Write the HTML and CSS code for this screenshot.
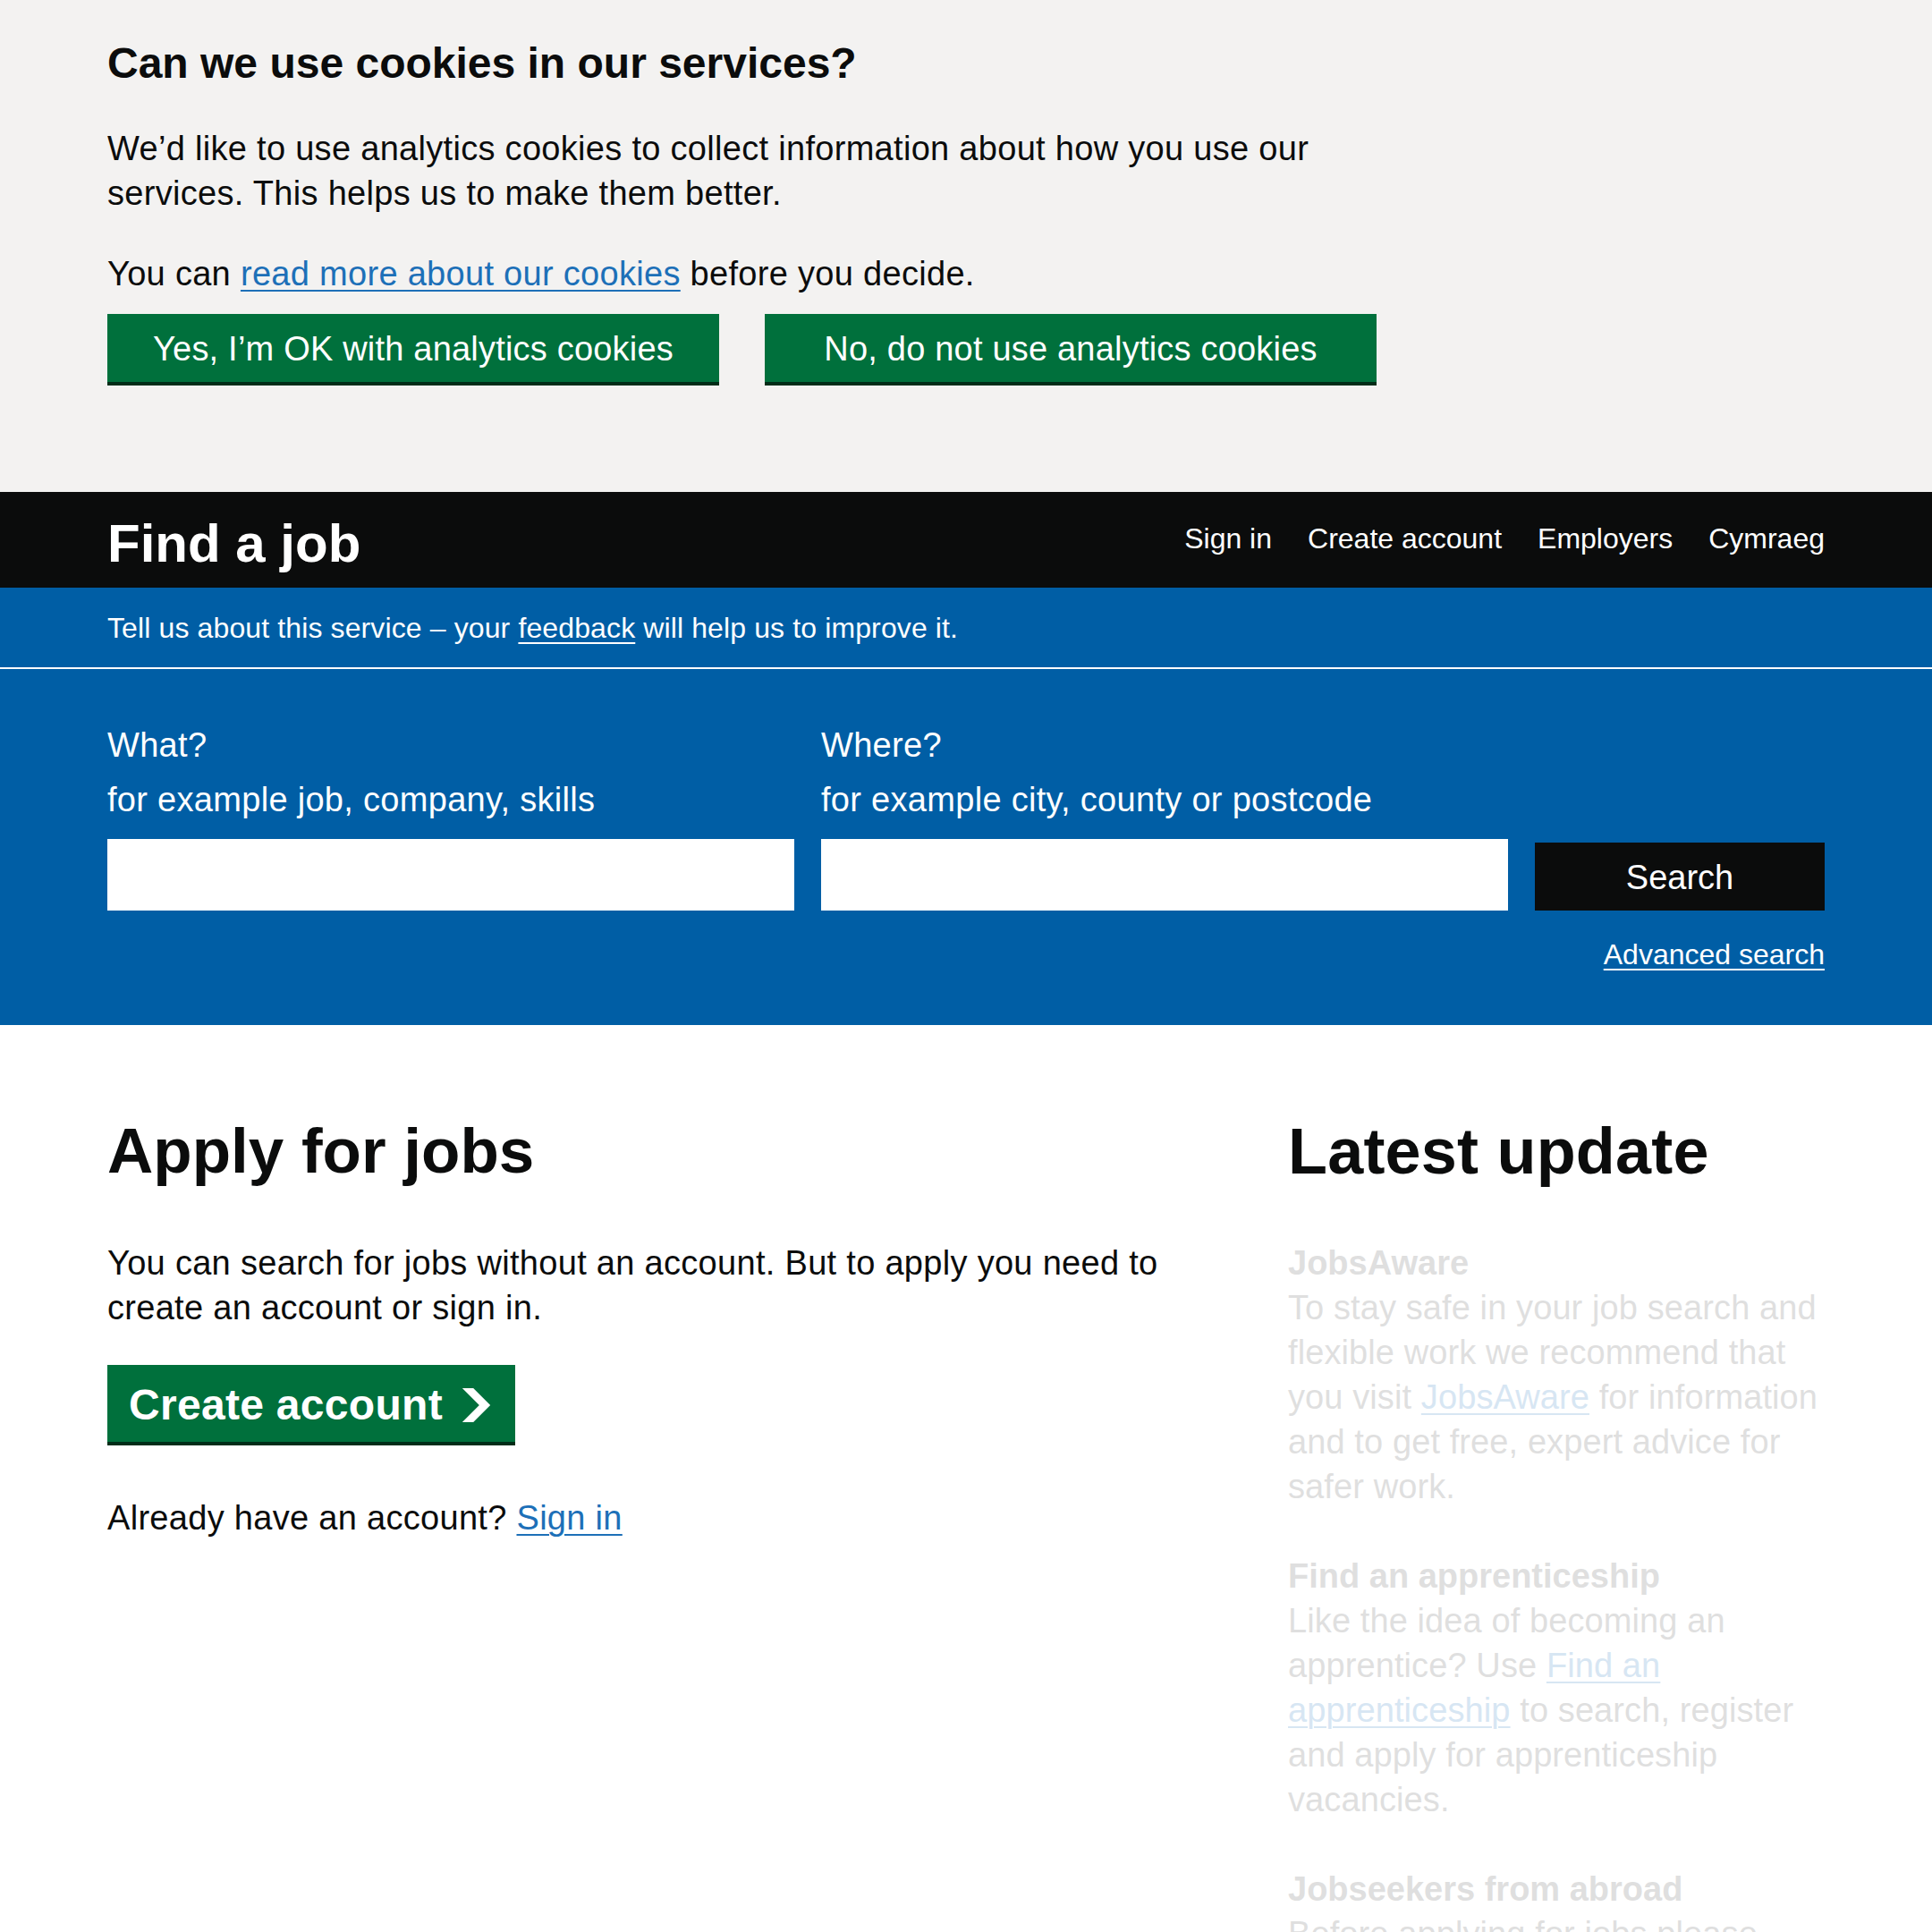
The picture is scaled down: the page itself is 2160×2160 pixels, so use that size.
FILE: index.html
```html
<!DOCTYPE html>
<html lang="en">
<head>
<meta charset="utf-8">
<title>Find a job - GOV.UK</title>
<link rel="stylesheet" href="styles.css">
</head>
<body>
<div class="cookie-banner">
  <div class="container">
    <h2 class="cookie-title">Can we use cookies in our services?</h2>
    <div class="cookie-text">
      <p class="body">We’d like to use analytics cookies to collect information about how you use our services. This helps us to make them better.</p>
      <p class="body body-last">You can <a class="link" href="#">read more about our cookies</a> before you decide.</p>
    </div>
    <div class="button-group">
      <button class="btn btn-cookie">Yes, I’m OK with analytics cookies</button>
      <button class="btn btn-cookie">No, do not use analytics cookies</button>
    </div>
  </div>
</div>

<header class="header">
  <div class="container header-row">
    <a class="service-name" href="#">Find a job</a>
    <nav class="nav">
      <a href="#">Sign in</a>
      <a href="#">Create account</a>
      <a href="#">Employers</a>
      <a href="#">Cymraeg</a>
    </nav>
  </div>
</header>

<div class="feedback">
  <div class="container">
    <p class="feedback-text">Tell us about this service – your <a href="#">feedback</a> will help us to improve it.</p>
  </div>
</div>

<section class="search">
  <div class="container">
    <form class="search-row">
      <div class="field">
        <label class="label" for="what">What?</label>
        <div class="hint">for example job, company, skills</div>
        <input class="input" id="what" type="text">
      </div>
      <div class="field">
        <label class="label" for="where">Where?</label>
        <div class="hint">for example city, county or postcode</div>
        <input class="input" id="where" type="text">
      </div>
      <div class="field-btn">
        <button class="btn-search" type="button">Search</button>
      </div>
    </form>
    <div class="advanced"><a href="#">Advanced search</a></div>
  </div>
</section>

<main class="main">
  <div class="grid-row">
    <div class="col-two-thirds">
      <h1 class="heading-l">Apply for jobs</h1>
      <p class="body">You can search for jobs without an account. But to apply you need to create an account or sign in.</p>
      <a class="btn btn-start" href="#">Create account
        <svg class="start-icon" xmlns="http://www.w3.org/2000/svg" width="35" height="38" viewBox="0 0 33 40" aria-hidden="true"><path fill="currentColor" d="M0 0h13l20 20-20 20H0l20-20z"/></svg>
      </a>
      <p class="body">Already have an account? <a class="link" href="#">Sign in</a></p>
    </div>
    <div class="col-one-third">
      <h2 class="heading-l heading-wide">Latest update</h2>
      <div class="updates">
        <div class="update">
          <h3 class="update-title">JobsAware</h3>
          <p class="update-text">To stay safe in your job search and flexible work we recommend that you visit <a href="#">JobsAware</a> for information and to get free, expert advice for safer work.</p>
        </div>
        <div class="update">
          <h3 class="update-title">Find an apprenticeship</h3>
          <p class="update-text">Like the idea of becoming an apprentice? Use <a href="#">Find an apprenticeship</a> to search, register and apply for apprenticeship vacancies.</p>
        </div>
        <div class="update">
          <h3 class="update-title">Jobseekers from abroad</h3>
          <p class="update-text">Before applying for jobs please check that you have the right to work in the UK.</p>
        </div>
      </div>
    </div>
  </div>
</main>
</body>
</html>
```

FILE: styles.css
```css
* { box-sizing: border-box; }

html, body {
  margin: 0;
  padding: 0;
  background: #ffffff;
  color: #0b0c0c;
  font-family: "Liberation Sans", Arial, Helvetica, sans-serif;
}

p, h1, h2, h3 { margin: 0; }

.container {
  width: 1920px;
  margin: 0 auto;
}

.body {
  font-size: 38px;
  line-height: 50px;
  letter-spacing: 0.3px;
}

.link {
  color: #1d70b8;
  text-decoration: underline;
  text-decoration-thickness: 2px;
  text-underline-offset: 5px;
}

/* Cookie banner */
.cookie-banner {
  background: #f3f2f1;
  height: 550px;
  padding-top: 41px;
}

.cookie-title {
  font-size: 48px;
  line-height: 60px;
  font-weight: 700;
  margin-bottom: 40px;
}

.cookie-text {
  max-width: 1400px;
}

.cookie-text .body { margin-bottom: 40px; }
.cookie-text .body-last { margin-bottom: 20px; }

.button-group {
  display: flex;
  gap: 51px;
}

.btn {
  font-family: inherit;
  border: 0;
  border-radius: 0;
  background: #00703c;
  color: #ffffff;
  box-shadow: 0 4px 0 #002d18;
  cursor: pointer;
  text-decoration: none;
}

.btn-cookie {
  width: 684px;
  height: 76px;
  font-size: 38px;
  line-height: 40px;
  letter-spacing: 0.2px;
  padding: 2px 0 0;
}

/* Header */
.header {
  background: #0b0c0c;
  height: 107px;
  padding-top: 23px;
}

.header-row {
  display: flex;
  justify-content: space-between;
  align-items: flex-start;
}

.service-name {
  color: #ffffff;
  font-size: 60px;
  line-height: 70px;
  font-weight: 700;
  text-decoration: none;
}

.nav {
  display: flex;
  gap: 40px;
  padding-top: 9px;
}

.nav a {
  color: #ffffff;
  font-size: 32px;
  line-height: 40px;
  text-decoration: none;
}

/* Feedback */
.feedback {
  background: #005ea5;
  padding: 25px 0 24px;
  border-bottom: 2px solid #ffffff;
}

.feedback-text {
  color: #ffffff;
  font-size: 32px;
  line-height: 40px;
  letter-spacing: 0.12px;
}

.feedback-text a {
  color: #ffffff;
  text-decoration: underline;
  text-decoration-thickness: 2px;
  text-underline-offset: 5px;
}

/* Search */
.search {
  background: #005ea5;
  padding: 60px 0 59px;
}

.search-row {
  display: flex;
  align-items: flex-end;
  gap: 30px;
  margin: 0;
}

.field {
  width: 768px;
  display: flex;
  flex-direction: column;
}

.label {
  color: #ffffff;
  font-size: 38px;
  line-height: 50px;
  letter-spacing: 0.3px;
}

.hint {
  color: #ffffff;
  font-size: 38px;
  line-height: 50px;
  letter-spacing: 0.3px;
  margin-top: 11px;
  margin-bottom: 19px;
}

.input {
  width: 768px;
  height: 80px;
  border: 0;
  border-radius: 0;
  background: #ffffff;
  font-family: inherit;
  font-size: 38px;
  padding: 0 10px;
  margin: 0;
}

.field-btn {
  width: 324px;
}

.btn-search {
  width: 324px;
  height: 76px;
  border: 0;
  border-radius: 0;
  background: #0b0c0c;
  color: #ffffff;
  font-family: inherit;
  font-size: 38px;
  line-height: 40px;
  padding: 2px 0 0;
  display: block;
}

.advanced {
  text-align: right;
  margin-top: 29px;
  font-size: 32px;
  line-height: 40px;
}

.advanced a {
  color: #ffffff;
  text-decoration: underline;
  text-decoration-thickness: 2px;
  text-underline-offset: 5px;
}

/* Main */
.main {
  width: 1980px;
  margin: 0 auto;
  padding-top: 101px;
}

.grid-row {
  display: flex;
}

.col-two-thirds {
  width: 1320px;
  padding: 0 30px;
}

.col-one-third {
  width: 660px;
  padding: 0 30px;
}

.heading-l {
  font-size: 71px;
  line-height: 80px;
  font-weight: 700;
  margin-bottom: 60px;
}

.heading-wide {
  font-size: 72px;
  letter-spacing: 0.2px;
}

.col-two-thirds .body { margin-bottom: 39px; }

.btn-start {
  display: inline-flex;
  align-items: center;
  font-size: 48px;
  line-height: 48px;
  font-weight: 700;
  letter-spacing: 0.3px;
  padding: 21px 26px 17px 24px;
  margin-bottom: 60px;
}

.start-icon {
  margin-left: 20px;
  flex-shrink: 0;
}

.updates {
  color: #dfdfdf;
}

.update {
  margin-bottom: 50px;
}

.update-title {
  font-size: 38px;
  line-height: 50px;
  font-weight: 700;
}

.update-text {
  font-size: 38px;
  line-height: 50px;
  letter-spacing: 0.1px;
}

.update-text a {
  color: #d7e6f3;
  text-decoration: underline;
  text-decoration-thickness: 2px;
  text-underline-offset: 5px;
}
```
